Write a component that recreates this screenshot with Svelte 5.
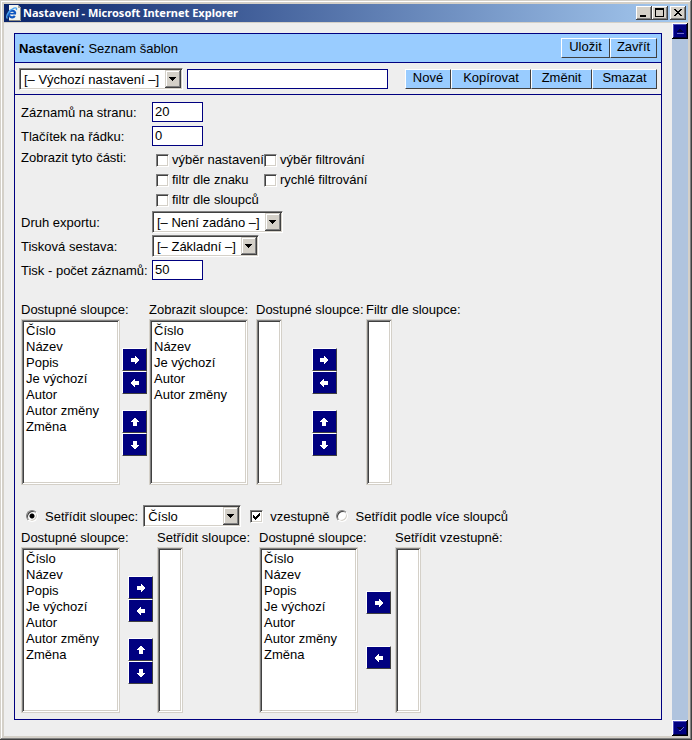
<script>
  const columns = ['Číslo', 'Název', 'Popis', 'Je výchozí', 'Autor', 'Autor změny', 'Změna'];
  const shown = ['Číslo', 'Název', 'Je výchozí', 'Autor', 'Autor změny'];
  const actions = [
    { text: 'Nové', width: 46 },
    { text: 'Kopírovat', width: 80 },
    { text: 'Změnit', width: 61 },
    { text: 'Smazat', width: 65 }
  ];
  const parts = ['výběr nastavení', 'výběr filtrování', 'filtr dle znaku', 'rychlé filtrování', 'filtr dle sloupců'];
  const arrows = {
    right: { path: 'M0 2h4V0h1v1h1v1h1v1h1v2H7v1H6v1H5v1H4V6H0z', name: 'Přidat' },
    left: { path: 'M8 2H4V0H3v1H2v1H1v1H0v2h1v1h1v1h1v1h1V6h4z', name: 'Odebrat' },
    up: { path: 'M3 0h2v1h1v1h1v1h1v1H6v4H2V4H0V3h1V2h1V1h1z', name: 'Nahoru' },
    down: { path: 'M3 8h2V7h1V6h1V5h1V4H6V0H2v4H0v1h1v1h1v1h1z', name: 'Dolů' }
  };
  let mode = $state('one');
  let ascending = $state(true);
</script>

{#snippet arrow(kind)}
  <button class="arrow" type="button" aria-label={arrows[kind].name}>
    <svg width="8" height="8" viewBox="0 0 8 8" shape-rendering="crispEdges"><path d={arrows[kind].path} fill="#fff" /></svg>
  </button>
{/snippet}

{#snippet list(id, label, items, wide)}
  <label class="heading" for={id}>{label}</label>
  <select {id} class="list" class:wide multiple>
    {#each items as item}<option>{item}</option>{/each}
  </select>
{/snippet}

{#snippet combo(id, items, kind)}
  <span class="combo {kind}">
    <select {id} aria-label={kind === 'preset' ? 'Nastavení' : undefined}>
      {#each items as item}<option>{item}</option>{/each}
    </select>
    <svg width="16" height="18" viewBox="0 0 16 18" shape-rendering="crispEdges" aria-hidden="true">
      <path fill="#404040" d="M0 0h16v18H0z" />
      <path fill="#d4d0c8" d="M0 0h15v17H0z" />
      <path fill="#808080" d="M1 1h14v16H1z" />
      <path fill="#fff" d="M1 1h13v15H1z" />
      <path fill="#d4d0c8" d="M2 2h12v14H2z" />
      <path d="M4 7h7v1h-1v1H9v1H8v1H7v-1H6V9H5V8H4z" />
    </svg>
  </span>
{/snippet}

<div class="window">
  <header class="titlebar">
    <svg class="logo" width="16" height="16" viewBox="0 0 16 16" aria-hidden="true">
      <path d="M3 0h9l3 3v13H3z" fill="#f4f4ee" />
      <path d="M12 0v3h3z" fill="#a8a8a0" />
      <path d="M14.500 3v12.500H3" fill="none" stroke="#8b8b83" />
      <path d="M9.300 8.500A3.300 3.300 0 1 0 8.800 10.800" fill="none" stroke="#1258c0" stroke-width="2.200" />
      <path d="M3 8.700h7" stroke="#1258c0" stroke-width="1.600" />
      <path d="M1.500 13.500C-1 12 3 5 8 3.200c2.500-.8 3 .3 2.200 1.800" fill="none" stroke="#4ba3ee" stroke-width="1.400" />
    </svg>
    <h1>Nastavení - Microsoft Internet Explorer</h1>
    <div class="controls">
      <button type="button" aria-label="Minimalizovat"><svg width="12" height="10" viewBox="0 0 12 10" shape-rendering="crispEdges"><path d="M2 7h6v2H2z" /></svg></button>
      <button type="button" aria-label="Maximalizovat"><svg width="12" height="10" viewBox="0 0 12 10" shape-rendering="crispEdges"><path fill-rule="evenodd" d="M1 0h9v9H1zM2 2v6h7V2z" /></svg></button>
      <button class="close" type="button" aria-label="Zavřít okno"><svg width="12" height="10" viewBox="0 0 12 10" shape-rendering="crispEdges"><path d="M2 1h2v1h1v1h2V2h1V1h2v1H9v1H8v1H7v1h1v1h1v1h1v1H8V7H7V6H5v1H4v1H2V7h1V6h1V5h1V4H4V3H3V2H2z" /></svg></button>
    </div>
  </header>

  <div class="client">
    <main>
      <form class="panel" onsubmit={(e) => e.preventDefault()}>
        <div class="bar head">
          <h2>Nastavení: <span>Seznam šablon</span></h2>
          <div class="buttons">
            <button type="button" style:width="49px">Uložit</button>
            <button type="button" style:width="47px">Zavřít</button>
          </div>
        </div>
        <div class="bar tools">
          {@render combo('preset', ['[– Výchozí nastavení –]'], 'preset')}
          <input class="name" type="text" aria-label="Název nastavení" />
          <div class="buttons">
            {#each actions as a}
              <button type="button" style:width="{a.width}px">{a.text}</button>
            {/each}
          </div>
        </div>

        <div class="body">
          <div class="fields">
            <label for="perpage">Záznamů na stranu:</label>
            <input id="perpage" type="text" value="20" />
            <label for="perrow">Tlačítek na řádku:</label>
            <input id="perrow" type="text" value="0" />
            <span class="top" id="parts">Zobrazit tyto části:</span>
            <div class="parts" role="group" aria-labelledby="parts">
              {#each parts as part}
                <label><input type="checkbox" />{part}</label>
              {/each}
            </div>
            <label for="export">Druh exportu:</label>
            {@render combo('export', ['[– Není zadáno –]'], 'export')}
            <label for="report">Tisková sestava:</label>
            {@render combo('report', ['[– Základní –]'], 'report')}
            <label for="print">Tisk - počet záznamů:</label>
            <input id="print" type="text" value="50" />
          </div>

          <div class="lists display">
            <div class="group">
              {@render list('avail', 'Dostupné sloupce:', columns, true)}
              <div class="movers">
                <div>{@render arrow('right')}{@render arrow('left')}</div>
                <div>{@render arrow('up')}{@render arrow('down')}</div>
              </div>
            </div>
            <div class="group">{@render list('shown', 'Zobrazit sloupce:', shown, true)}</div>
            <div class="group">
              {@render list('favail', 'Dostupné sloupce:', [], false)}
              <div class="movers">
                <div>{@render arrow('right')}{@render arrow('left')}</div>
                <div>{@render arrow('up')}{@render arrow('down')}</div>
              </div>
            </div>
            <div class="group">{@render list('filter', 'Filtr dle sloupce:', [], false)}</div>
          </div>

          <div class="sort">
            <div class="option">
              <input id="one" type="radio" name="mode" value="one" bind:group={mode} />
              <label for="one">Setřídit sloupec:</label>
            </div>
            {@render combo('sortcol', columns, 'column')}
            <div class="option direction">
              <input id="asc" type="checkbox" bind:checked={ascending} />
              <label for="asc">vzestupně</label>
            </div>
            <div class="option">
              <input id="many" type="radio" name="mode" value="many" bind:group={mode} />
              <label for="many">Setřídit podle více sloupců</label>
            </div>
          </div>

          <div class="lists sorting">
            <div class="group">
              {@render list('savail', 'Dostupné sloupce:', columns, true)}
              <div class="movers">
                <div>{@render arrow('right')}{@render arrow('left')}</div>
                <div>{@render arrow('up')}{@render arrow('down')}</div>
              </div>
            </div>
            <div class="group">{@render list('sorted', 'Setřídit sloupce:', [], false)}</div>
            <div class="group">
              {@render list('aavail', 'Dostupné sloupce:', columns, true)}
              <div class="movers apart">
                {@render arrow('right')}
                {@render arrow('left')}
              </div>
            </div>
            <div class="group">{@render list('asorted', 'Setřídit vzestupně:', [], false)}</div>
          </div>
        </div>
      </form>
    </main>
    <div class="scrollbar">
      <button type="button" aria-label="Posunout nahoru"><svg width="12" height="12" viewBox="0 0 12 12" shape-rendering="crispEdges"><path d="M3 7V6h1V5h1V4h2v1h1v1h1v1z" fill="#00003c" /><path d="M3 8h7v1H3z" fill="#6a6ac8" /></svg></button>
      <button type="button" aria-label="Posunout dolů"><svg width="12" height="12" viewBox="0 0 12 12" shape-rendering="crispEdges"><path d="M2 5h7v1H8v1H7v1H5V7H4V6H3z" fill="#00003c" /><path d="M9 5h1v1H9v1H8v1H7v1H5V8h2V7h1V6h1z" fill="#6a6ac8" /></svg></button>
    </div>
  </div>
</div>

<style>
  :global(body) { margin: 0; background: #d4d0c8; }
  .window, .window * { box-sizing: border-box; }
  .window {
    display: flex;
    flex-direction: column;
    min-height: 100vh;
    padding: 4px;
    background: #d4d0c8;
    box-shadow: inset -1px -1px #404040, inset 1px 1px #d4d0c8, inset -2px -2px #808080, inset 2px 2px #fff;
    font: 13px/20px "Liberation Sans", Arial, sans-serif;
    color: #000;
  }
  button, input, select { margin: 0; font: inherit; color: inherit; border-radius: 0; appearance: none; }
  button { padding: 0; }
  svg { display: block; }

  .titlebar {
    display: flex;
    align-items: center;
    height: 18px;
    margin-bottom: 1px;
    padding: 0 2px;
    background: linear-gradient(90deg, #0a246a, #a6caf0);
  }
  .titlebar h1 {
    flex: 1;
    margin: 0 0 0 1px;
    font: bold 11px/18px "Noto Sans", Tahoma, sans-serif;
    color: #fff;
    white-space: nowrap;
  }
  .controls { display: flex; }
  .controls button {
    width: 16px;
    height: 14px;
    padding: 2px;
    border: 0;
    background: #d4d0c8;
    box-shadow: inset -1px -1px #404040, inset 1px 1px #fff, inset -2px -2px #808080;
  }
  .controls .close { margin-left: 2px; }

  .client { flex: 1; display: flex; background: #eee; }
  main { flex: 1; min-width: 0; padding: 10px 10px 16px; }
  .scrollbar {
    display: flex;
    flex-direction: column;
    justify-content: space-between;
    width: 16px;
    background: #b0c4de;
  }
  .scrollbar button {
    width: 16px;
    height: 16px;
    padding: 2px;
    border: 0;
    background: #000080;
    box-shadow: inset -1px -1px #000, inset 1px 1px #fff, inset -2px -2px #00003c, inset 2px 2px #5050c0;
  }

  .panel { border: 1px solid #000080; }
  .bar { display: flex; align-items: center; padding: 0 4px; border-bottom: 1px solid #000080; }
  .head { height: 29px; background: #9cf; }
  .head h2 { flex: 1; margin: 0; padding-top: 2px; font-size: 13px; line-height: 20px; }
  .head span { font-weight: normal; }
  .tools { height: 32px; gap: 4px; }
  .tools .buttons { margin-left: auto; }
  .buttons { display: flex; }
  .buttons button {
    height: 20px;
    border: 1px solid;
    border-color: #fff #404040 #404040 #fff;
    background: #9cf;
    line-height: 16px;
    padding-bottom: 2px;
  }

  input[type='text'] {
    width: 51px;
    height: 20px;
    padding: 0 2px 2px;
    border: 1px solid #000080;
    background: #fff;
    line-height: 16px;
  }
  input.name { flex: 0 1 201px; min-width: 0; }

  .combo { position: relative; display: inline-block; height: 22px; }
  .combo select {
    display: block;
    width: 100%;
    height: 22px;
    padding: 2px 18px 0 4px;
    border: 1px solid;
    border-color: #808080 #fff #fff #808080;
    background: #fff;
    box-shadow: inset 1px 1px #404040, inset -1px -1px #d4d0c8;
    line-height: 18px;
  }
  .combo svg { position: absolute; top: 2px; right: 2px; pointer-events: none; }
  .preset { width: 164px; }
  .export { width: 131px; }
  .report { width: 107px; }
  .column { width: 98px; }

  .body { padding: 5px 6px 6px; }
  .fields {
    display: grid;
    grid-template-columns: 131px 1fr;
    grid-template-rows: 24px 24px 62px 24px 24px 24px;
    align-items: center;
    white-space: nowrap;
  }
  .fields > label { padding-top: 2px; }
  .top { align-self: start; }
  .parts {
    display: grid;
    grid-template-columns: 108px 1fr;
    padding: 2px 0 0 4px;
  }
  .parts label { display: flex; align-items: center; gap: 3px; height: 20px; }

  input[type='checkbox'] {
    flex: none;
    width: 13px;
    height: 13px;
    border: 1px solid;
    border-color: #808080 #fff #fff #808080;
    background: #fff;
    box-shadow: inset 1px 1px #404040, inset -1px -1px #d4d0c8;
  }
  input[type='checkbox']:checked {
    background: #fff url("data:image/svg+xml,%3Csvg xmlns='http://www.w3.org/2000/svg' width='11' height='11' shape-rendering='crispEdges'%3E%3Cpath d='M2 4h1v1h1v1h1V5h1V4h1V3h1V2h1v3H8v1H7v1H6v1H5v1H4V8H3V7H2z'/%3E%3C/svg%3E") no-repeat;
  }
  input[type='radio'] {
    flex: none;
    width: 12px;
    height: 12px;
    border: 1px solid;
    border-color: #808080 #fff #fff #808080;
    border-radius: 50%;
    background: #fff;
    box-shadow: inset 1px 1px #404040, inset -1px -1px #d4d0c8;
  }
  input[type='radio']:checked { background: radial-gradient(circle, #000 2px, #fff 3px); }

  .lists { display: grid; }
  .display { grid-template-columns: 128px 107px 110px 1fr; margin-top: 17px; }
  .sorting { grid-template-columns: 136px 102px 136px 1fr; }
  .group { display: grid; grid-template-columns: auto 1fr; align-items: start; }
  .heading { grid-column: 1 / -1; height: 20px; padding-top: 1px; white-space: nowrap; }
  .list {
    width: 26px;
    height: 166px;
    padding: 3px 2px 2px;
    border: 1px solid #d4d0c8;
    background: #fff;
    box-shadow: inset 1px 1px #808080, inset -1px -1px #fff, inset 2px 2px #404040, inset -2px -2px #d4d0c8;
    overflow: hidden;
  }
  .list.wide { width: 99px; }
  .list option { height: 16px; min-height: 16px; padding: 0 2px; line-height: 16px; }
  .movers { display: grid; gap: 16px; justify-content: center; padding-top: 29px; }
  .sorting .movers { justify-content: end; padding-right: 4px; }
  .sorting .apart { gap: 32px; padding-top: 44px; }
  .arrow {
    display: flex;
    align-items: center;
    justify-content: center;
    width: 25px;
    height: 23px;
    border: 1px solid;
    border-color: #fff #404040 #404040 #fff;
    background: #000080;
  }

  .sort {
    display: flex;
    align-items: center;
    gap: 5px;
    height: 22px;
    margin-top: 20px;
    padding-left: 5px;
    white-space: nowrap;
  }
  .option { display: flex; align-items: center; gap: 7px; }
  .option label { padding-top: 2px; }
  .direction { margin: 0 2px 0 4px; }
</style>
